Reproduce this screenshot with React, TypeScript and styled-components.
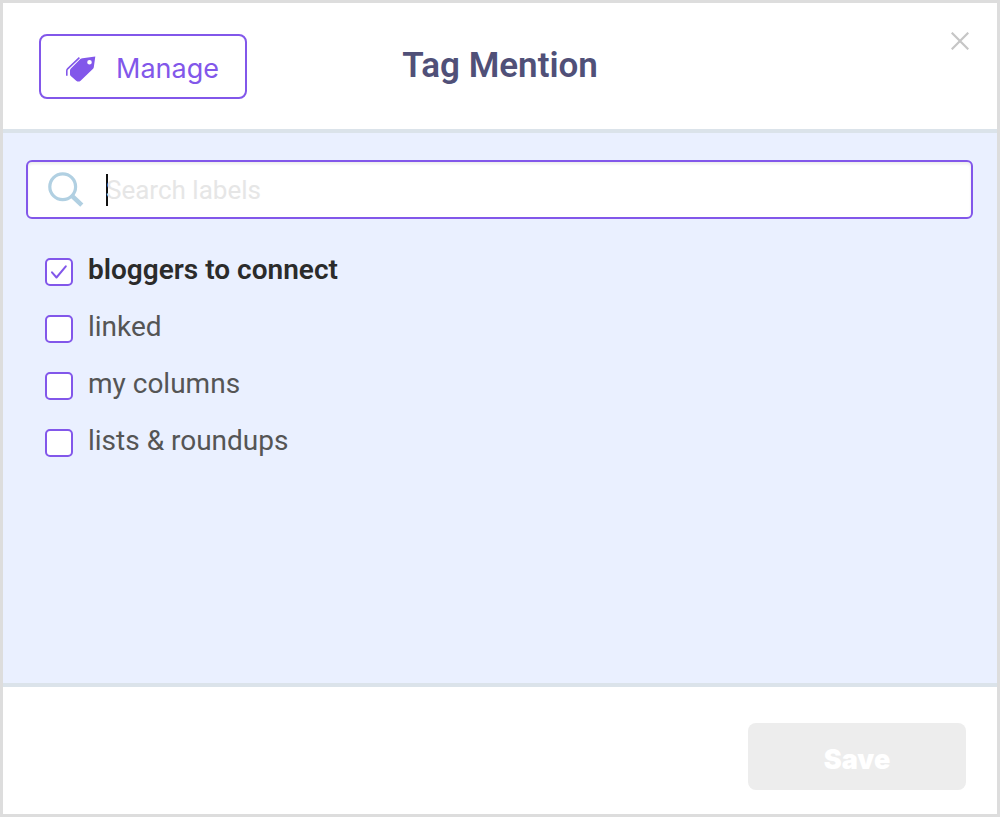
import React, { useState } from "react";
import styled, { createGlobalStyle } from "styled-components";

const GlobalStyle = createGlobalStyle`
  *, *::before, *::after { box-sizing: border-box; }
  body { margin: 0; font-family: Roboto, "Liberation Sans", sans-serif; }
`;

const violet = "#8257ea";

const Dialog = styled.section`
  display: flex;
  flex-direction: column;
  min-height: 100vh;
  background: #fff;
  border: 3px solid #dddddd;
`;

const Header = styled.header`
  display: grid;
  grid-template-columns: 1fr auto 1fr;
  align-items: start;
  padding: 21px 20px 30px;
  border-bottom: 4px solid #dbe3ea;
`;

const ManageButton = styled.button`
  display: flex;
  align-items: center;
  justify-self: start;
  gap: 20px;
  height: 65px;
  margin: 10px 0 0 16px;
  padding: 4px 26px 0 25px;
  color: ${violet};
  background: #fff;
  border: 2px solid ${violet};
  border-radius: 8px;
  font: 400 27px/32px Inter, sans-serif;
`;

const Title = styled.h1`
  margin: 20px 0 0;
  color: #505078;
  font-size: 35px;
  font-weight: 600;
  line-height: 44px;
`;

const CloseButton = styled.button`
  display: grid;
  place-items: center;
  justify-self: end;
  width: 34px;
  height: 34px;
  padding: 0;
  color: #c6c6c6;
  background: none;
  border: 0;
`;

const Content = styled.main`
  flex: 1;
  padding: 27px 24px 32px 23px;
  background: #eaf0ff;
`;

const SearchBox = styled.label`
  display: flex;
  align-items: center;
  height: 59px;
  padding: 0 20px;
  background: #fff;
  border: 2px solid ${violet};
  border-radius: 6px;
  box-shadow: inset 0 2px 3px #ececec;
`;

const Caret = styled.span`
  width: 2px;
  height: 32px;
  margin-left: 22px;
  background: #111;
`;

const SearchInput = styled.input`
  flex: 1;
  min-width: 0;
  margin-left: -2px;
  padding: 0;
  color: #333;
  caret-color: transparent;
  background: none;
  border: 0;
  outline: 0;
  font: 400 26px/32px Roboto, sans-serif;

  &::placeholder { color: #e6e6e6; opacity: 1; }
`;

const LabelList = styled.ul`
  display: flex;
  flex-direction: column;
  gap: 25px;
  margin: 0;
  padding: 35px 19px 0;
  list-style: none;
`;

const LabelRow = styled.label<{ $checked: boolean }>`
  display: flex;
  align-items: flex-end;
  gap: 15px;
  height: 32px;
  color: ${(p) => (p.$checked ? "#2b2b2b" : "#555555")};
  font-size: 28px;
  font-weight: ${(p) => (p.$checked ? 600 : 400)};
  line-height: 32px;
`;

const BoxWrap = styled.span`
  display: grid;
  place-items: center;
  width: 28px;
  height: 28px;

  > * { grid-area: 1 / 1; }
  > svg { pointer-events: none; }
`;

const Checkbox = styled.input`
  appearance: none;
  width: 28px;
  height: 28px;
  margin: 0;
  background: #fff;
  border: 2px solid ${violet};
  border-radius: 5px;
`;

const Footer = styled.footer`
  display: flex;
  justify-content: flex-end;
  padding: 36px 31px 24px;
  border-top: 4px solid #dbe3ea;
`;

const SaveButton = styled.button`
  width: 218px;
  height: 67px;
  padding: 7px 0 0;
  color: #fff;
  background: #ededed;
  border: 0;
  border-radius: 8px;
  font: 900 27px/32px Inter, sans-serif;
`;

const TagIcon = () => (
  <svg width="30" height="26" viewBox="0 0 30 26" aria-hidden="true">
    <path
      fill="currentColor"
      fillRule="evenodd"
      d="M16.6 2.2 29.3.6 27.8 11.2Q27.6 12.3 26.8 13.1L14.6 24.7Q12.4 26.4 10.2 24.7L4.8 20Q4 19.2 4 18.2V14.6Q4 13.4 4.9 12.5L14.4 3.1Q15.3 2.3 16.6 2.2ZM23.5 4A2.3 2.3 0 1 0 23.5 8.6A2.3 2.3 0 1 0 23.5 4Z"
    />
    <path fill="none" stroke="currentColor" strokeWidth="1.6" d="M13.4 1.6 1.6 12.9Q.8 13.7.8 14.8V19.8" />
  </svg>
);

const SearchIcon = () => (
  <svg width="36" height="36" viewBox="0 0 36 36" aria-hidden="true">
    <g fill="none" stroke="#b1d0e2">
      <circle cx="14.7" cy="14.7" r="12.9" strokeWidth="3.2" />
      <path strokeWidth="4.6" d="m23.2 23.2 10.6 10" />
    </g>
  </svg>
);

const CloseIcon = () => (
  <svg width="18" height="18" viewBox="0 0 18 18" aria-hidden="true">
    <path fill="none" stroke="currentColor" strokeWidth="2.2" d="m.7.7 16.6 16.6M17.3.7.7 17.3" />
  </svg>
);

const CheckIcon = () => (
  <svg width="18" height="16" viewBox="0 0 18 16" aria-hidden="true">
    <path fill="none" stroke={violet} strokeWidth="2" strokeLinecap="round" strokeLinejoin="round" d="m2 8.3 4.5 5.2L15.8 2.3" />
  </svg>
);

const labels = ["bloggers to connect", "linked", "my columns", "lists & roundups"];

export default function App() {
  const [selected, setSelected] = useState<string[]>(["bloggers to connect"]);
  const [query, setQuery] = useState("");

  const toggle = (name: string) =>
    setSelected((s) => (s.includes(name) ? s.filter((n) => n !== name) : [...s, name]));

  return (
    <>
      <GlobalStyle />
      <Dialog role="dialog" aria-labelledby="dialog-title">
        <Header>
          <ManageButton type="button">
            <TagIcon />
            Manage
          </ManageButton>
          <Title id="dialog-title">Tag Mention</Title>
          <CloseButton type="button" aria-label="Close">
            <CloseIcon />
          </CloseButton>
        </Header>
        <Content>
          <SearchBox>
            <SearchIcon />
            <Caret />
            <SearchInput
              type="text"
              aria-label="Search labels"
              placeholder="Search labels"
              value={query}
              onChange={(e) => setQuery(e.target.value)}
            />
          </SearchBox>
          <LabelList>
            {labels
              .filter((name) => name.includes(query))
              .map((name) => {
                const checked = selected.includes(name);
                return (
                  <li key={name}>
                    <LabelRow $checked={checked}>
                      <BoxWrap>
                        <Checkbox type="checkbox" checked={checked} onChange={() => toggle(name)} />
                        {checked && <CheckIcon />}
                      </BoxWrap>
                      <span>{name}</span>
                    </LabelRow>
                  </li>
                );
              })}
          </LabelList>
        </Content>
        <Footer>
          <SaveButton type="button">Save</SaveButton>
        </Footer>
      </Dialog>
    </>
  );
}
